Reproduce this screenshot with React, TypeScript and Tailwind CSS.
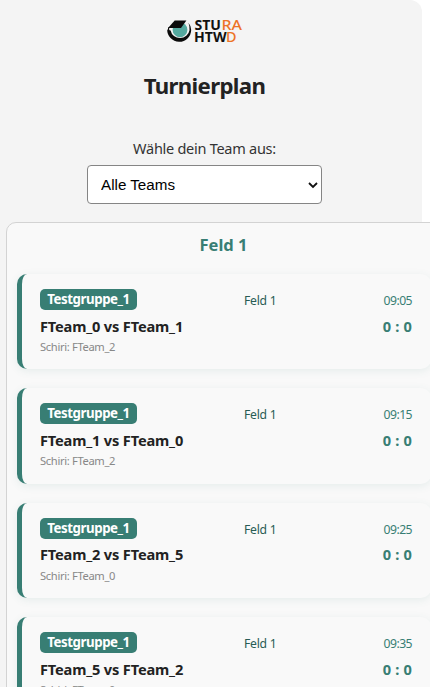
import React from "react";

type Match = { group: string; field: string; time: string; score: string; home: string; away: string; referee: string };

const matches: Match[] = [
  { group: "Testgruppe_1", field: "Feld 1", time: "09:05", score: "0 : 0", home: "FTeam_0", away: "FTeam_1", referee: "FTeam_2" },
  { group: "Testgruppe_1", field: "Feld 1", time: "09:15", score: "0 : 0", home: "FTeam_1", away: "FTeam_0", referee: "FTeam_2" },
  { group: "Testgruppe_1", field: "Feld 1", time: "09:25", score: "0 : 0", home: "FTeam_2", away: "FTeam_5", referee: "FTeam_0" },
  { group: "Testgruppe_1", field: "Feld 1", time: "09:35", score: "0 : 0", home: "FTeam_5", away: "FTeam_2", referee: "FTeam_0" },
];

function Logo() {
  return (
    <svg className="block h-[26px] w-[78px] shrink-0 overflow-visible" viewBox="0 0 78 26">
      <path d="M1.2 11.5A12 12 0 0 0 25.2 12Q25.2 8 22.4 4.8Q24 8.5 23.5 12.2A9.6 9.4 0 0 1 4.6 12.5Z" fill="#0b0b0b" />
      <circle cx="14" cy="11.8" r="7.4" fill="#55a99f" />
      <path d="M8.7 2.5H20.4L15 10.1H2Z" fill="#0b0b0b" />
      <path d="M2.6 9.5V14" stroke="#0b0b0b" strokeWidth="1.2" />
      <g fontFamily="'Noto Sans', sans-serif" fontSize="13.6" fontWeight="700">
        <text x="28.5" y="12" textLength="26.5" lengthAdjust="spacingAndGlyphs" fill="#111">STU</text>
        <text x="55.5" y="12" textLength="20.5" lengthAdjust="spacingAndGlyphs" fontWeight="500" fill="#ed7328">RA</text>
        <text x="28" y="24" textLength="32.5" lengthAdjust="spacingAndGlyphs" fill="#111">HTW</text>
        <text x="60" y="24" textLength="10.5" lengthAdjust="spacingAndGlyphs" fontWeight="500" fill="#ed7328">D</text>
      </g>
    </svg>
  );
}

function MatchCard({ match }: { match: Match }) {
  return (
    <article className="h-[95.3px] w-[414px] shrink-0 rounded-[10px] border-l-[5px] border-[#387e74] bg-[#f9f9f9] pt-[15px] pr-[19px] pl-[18px] shadow-[0_2px_8px_rgba(56,126,116,0.10)]">
      <div className="flex h-[21px] items-center justify-between">
        <span className="flex h-[21px] w-[97px] items-center justify-center rounded-[5px] bg-[#387e74] pt-px text-[13.3px] font-bold tracking-[-0.45px] text-white">{match.group}</span>
        <span className="ml-[107px] flex-1 pt-[3px] text-[12.2px] tracking-[-0.25px] text-[#285c54]">{match.field}</span>
        <span className="pt-[3px] text-[12.2px] tracking-[-0.55px] text-[#387e74]">{match.time}</span>
      </div>
      <div className="mt-[6px] flex h-[21px] items-center justify-between text-[14.6px] font-bold">
        <span className="tracking-[-0.17px] text-[#222]">{match.home} vs {match.away}</span>
        <span className="tracking-[0.15px] text-[#387e74]">{match.score}</span>
      </div>
      <div className="mt-[2px] h-4 text-[11.2px] leading-4 tracking-[-0.35px] text-[#888]">Schiri: {match.referee}</div>
    </article>
  );
}

export default function App() {
  return (
    <div className="h-[687px] w-[430px] overflow-hidden bg-white font-['Noto_Sans',sans-serif]">
      <main className="flex h-full w-[422px] flex-col rounded-tr-[12px] bg-[#f4f4f4]">
        <header className="flex flex-col items-center pt-[18px] pr-[13px]">
          <Logo />
          <h1 className="mt-[26px] h-8 text-[22.2px] leading-8 font-bold tracking-[-0.65px] text-[#222]">Turnierplan</h1>
        </header>
        <div className="mt-[36px] flex flex-col items-center pr-[13px]">
          <label htmlFor="team" className="h-[22px] text-[14.5px] leading-[20px] tracking-[-0.27px] text-[#333]">Wähle dein Team aus:</label>
          <div className="mt-[5px] grid h-[39px] w-[235px]">
            <select id="team" className="col-start-1 row-start-1 appearance-none rounded-[4px] border border-[#858585] bg-white pt-px pl-[13px] font-['Liberation_Sans',sans-serif] text-[15.2px] text-black">
              <option>Alle Teams</option>
            </select>
            <svg className="pointer-events-none col-start-1 row-start-1 mr-[4px] h-[8px] w-[10px] self-center justify-self-end" viewBox="0 0 10 8">
              <path d="M1 2L5 6L9 2" fill="none" stroke="#111" strokeWidth="1.8" />
            </svg>
          </div>
        </div>
        <section className="mt-[18px] ml-[6px] h-[600px] w-[435px] rounded-[10px] border border-[#d3d3d3] bg-[#f9f9f9] pl-[10px]">
          <h2 className="mt-[10px] h-6 w-[413px] text-center text-[16.5px] leading-6 font-bold text-[#387e74]">Feld 1</h2>
          <div className="mt-[17px] flex flex-col gap-[19.1px]">
            {matches.map((match) => <MatchCard key={match.time} match={match} />)}
          </div>
        </section>
      </main>
    </div>
  );
}
